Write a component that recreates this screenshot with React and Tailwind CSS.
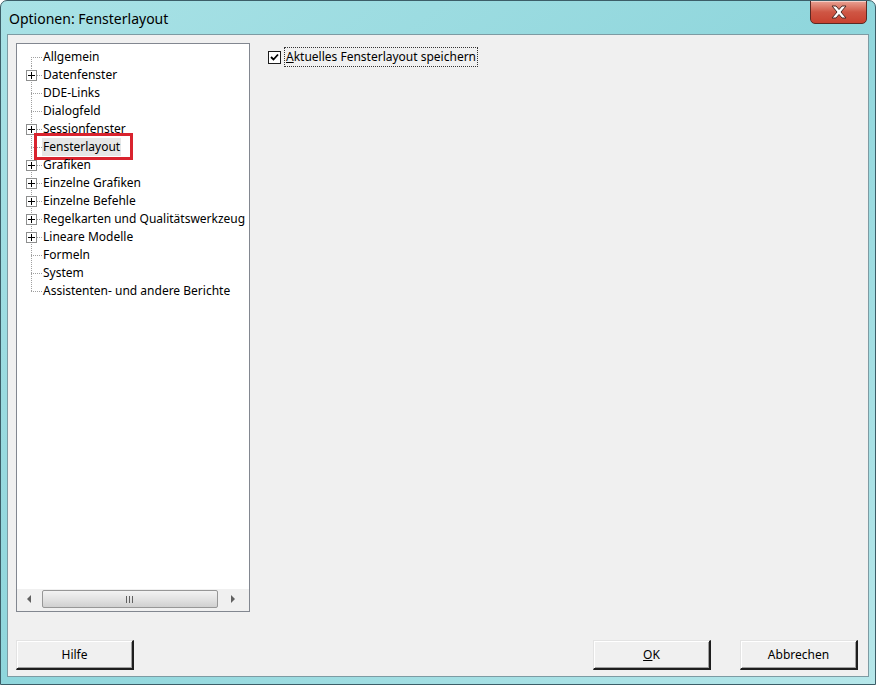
import React from "react";

const items = [
  { label: "Allgemein" },
  { label: "Datenfenster", plus: true },
  { label: "DDE-Links" },
  { label: "Dialogfeld" },
  { label: "Sessionfenster", plus: true },
  { label: "Fensterlayout", selected: true },
  { label: "Grafiken", plus: true },
  { label: "Einzelne Grafiken", plus: true },
  { label: "Einzelne Befehle", plus: true },
  { label: "Regelkarten und Qualitätswerkzeug", plus: true },
  { label: "Lineare Modelle", plus: true },
  { label: "Formeln" },
  { label: "System" },
  { label: "Assistenten- und andere Berichte" },
];

const TreeLines = ({ first, last, plus }) => (
  <svg width="26" height="18" className="shrink-0">
    <line
      x1="14.5"
      y1={first ? 9 : 0}
      x2="14.5"
      y2={last ? 9 : 18}
      stroke="#a0a0a0"
      strokeDasharray="1 1"
    />
    <line x1="14" y1="9.5" x2="25" y2="9.5" stroke="#a0a0a0" strokeDasharray="1 1" />
    {plus && (
      <g>
        <rect x="9.5" y="4.5" width="10" height="10" fill="#fff" stroke="#8e8f8f" />
        <line x1="11" y1="9.5" x2="18" y2="9.5" stroke="#000" />
        <line x1="14.5" y1="6" x2="14.5" y2="13" stroke="#000" />
      </g>
    )}
  </svg>
);

const Button = ({ children, className }) => (
  <div
    className={
      "w-[118px] h-[30px] flex items-center justify-center bg-[#f0f0f0] border-t border-l border-t-[#e3e3e3] border-l-[#e3e3e3] border-b-2 border-r-2 border-b-[#1e1e1e] border-r-[#1e1e1e] shadow-[inset_1px_1px_0_#ffffff,inset_-1px_-1px_0_#a0a0a0] text-[12px] text-black " +
      (className || "")
    }
  >
    {children}
  </div>
);

export default function App() {
  return (
    <div
      className="w-[876px] h-[685px] flex flex-col rounded-t-[7px] border border-[#3c5e68] bg-gradient-to-br from-[#a9e2e6] via-[#8fd6dc] to-[#b6e7ea] overflow-hidden"
      style={{ fontFamily: '"Noto Sans", "DejaVu Sans", sans-serif' }}
    >
      {/* title bar */}
      <div className="h-[33px] flex items-start justify-between shrink-0">
        <div className="pl-[8px] pt-[8px] text-[14px] leading-[20px] text-black">
          Optionen: Fensterlayout
        </div>
        <div className="mr-[8px] w-[57px] h-[24px] -mt-px rounded-b-[5px] border border-[#5a2a24] bg-gradient-to-b from-[#e9a294] via-[#cf5644] to-[#c8412f] flex items-center justify-center shadow-[inset_0_1px_0_rgba(255,255,255,0.5)]">
          <svg width="18" height="14" viewBox="0 0 18 14">
            <path
              d="M2 1 L6 1 L9 4.5 L12 1 L16 1 L11 7 L16 13 L12 13 L9 9.5 L6 13 L2 13 L7 7 Z"
              fill="#ffffff"
              stroke="#4a2a26"
              strokeWidth="1"
              strokeLinejoin="round"
            />
          </svg>
        </div>
      </div>

      {/* client area */}
      <div className="mx-[6px] flex-1 mb-[7px] bg-[#f0f0f0] border border-[#7d9ba3] flex flex-col px-[8px] pt-[8px] pb-[6px]">
        <div className="flex flex-1">
          {/* tree */}
          <div className="w-[234px] h-[569px] border border-[#828790] bg-white flex flex-col">
            <div className="flex-1 pt-[4px] text-[12px] text-black">
              {items.map((it, i) => (
                <div key={it.label} className="relative h-[18px] flex items-center">
                  <TreeLines first={i === 0} last={i === items.length - 1} plus={it.plus} />
                  <span
                    className={
                      "whitespace-nowrap leading-[18px] px-[1px] -ml-[1px] " +
                      (it.selected ? "bg-[#e6e6e6]" : "")
                    }
                  >
                    {it.label}
                  </span>
                  {it.selected && (
                    <div className="absolute left-[17px] top-[-5px] w-[99px] h-[27px] border-[3px] border-[#d9232e]" />
                  )}
                </div>
              ))}
            </div>
            {/* horizontal scrollbar */}
            <div className="h-[22px] bg-[#f0f0f0] flex items-start pt-[1px]">
              <div className="w-[25px] h-[18px] flex items-center justify-center">
                <svg width="5" height="8" viewBox="0 0 5 8">
                  <path d="M4 0 L0 4 L4 8 Z" fill="#606060" />
                </svg>
              </div>
              <div className="w-[176px] h-[18px] rounded-[2px] border border-[#979797] bg-gradient-to-b from-[#f3f3f3] via-[#e3e3e3] to-[#d0d0d0] flex items-center justify-center">
                <svg width="8" height="7" viewBox="0 0 8 7">
                  <path d="M0.5 0 V7 M3.5 0 V7 M6.5 0 V7" stroke="#606060" strokeWidth="1" />
                </svg>
              </div>
              <div className="flex-1 h-[18px] flex items-center justify-center">
                <svg width="5" height="8" viewBox="0 0 5 8">
                  <path d="M0 0 L4 4 L0 8 Z" fill="#606060" />
                </svg>
              </div>
            </div>
          </div>

          {/* right panel */}
          <div className="pl-[18px] pt-[4px]">
            <div className="flex items-center h-[20px]">
              <div className="w-[13px] h-[13px] border border-[#1c1c1c] bg-white flex items-center justify-center">
                <svg width="9" height="9" viewBox="0 0 9 9">
                  <path d="M1 4 L3.5 6.5 L8 1.5" stroke="#000" strokeWidth="1.8" fill="none" />
                </svg>
              </div>
              <div className="ml-[3px] px-[1px] border border-dotted border-[#333] text-[12px] leading-[18px] text-black whitespace-nowrap">
                <span className="underline">A</span>ktuelles Fensterlayout speichern
              </div>
            </div>
          </div>
        </div>

        {/* buttons */}
        <div className="flex items-center">
          <Button>Hilfe</Button>
          <div className="flex-1" />
          <Button>
            <span className="underline">O</span>K
          </Button>
          <Button className="ml-[29px] mr-[2px]">Abbrechen</Button>
        </div>
      </div>
    </div>
  );
}
